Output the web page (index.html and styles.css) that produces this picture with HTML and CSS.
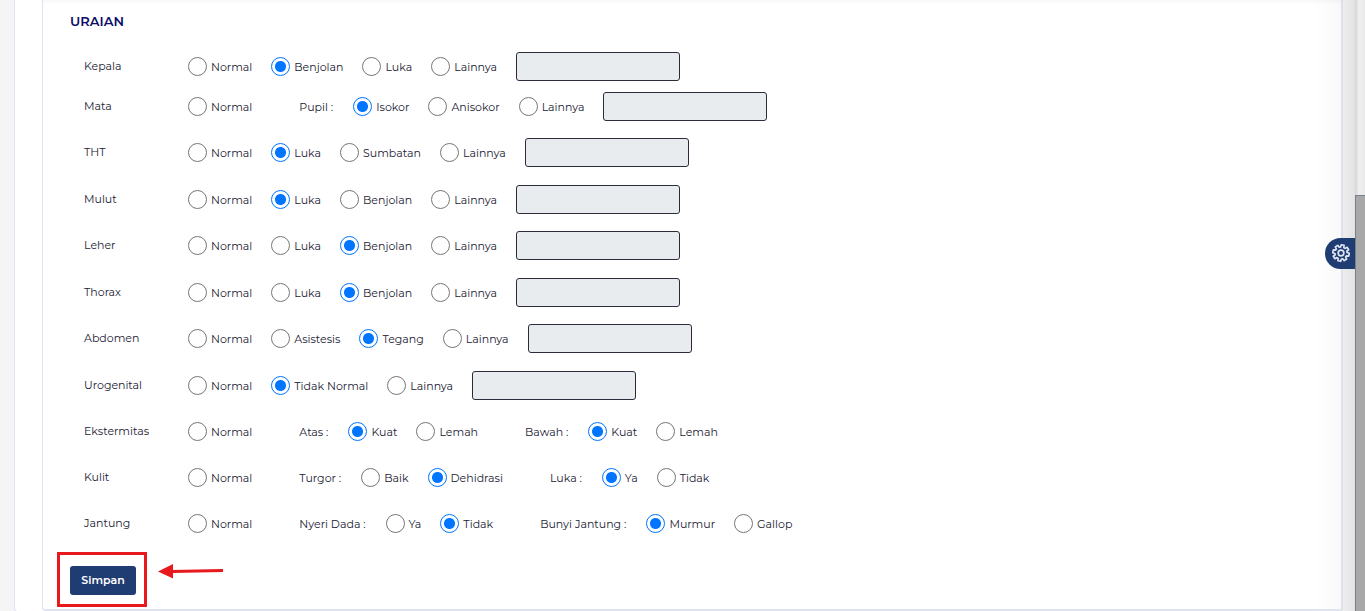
FILE: index.html
```
<!DOCTYPE html>
<html lang="id">
<head>
  <meta charset="UTF-8" />
  <meta name="viewport" content="width=device-width, initial-scale=1.0" />
  <title>Uraian</title>
  <link rel="stylesheet" href="styles.css">
</head>
<body>
  <div class="page">
    <main class="outer-card">
      <form class="inner-card">
        <h2>URAIAN</h2>

        <div class="rows">
          <div class="row">
            <span class="row-label">Kepala</span>
            <label class="option"><input type="radio" name="kepala">Normal</label>
            <label class="option"><input type="radio" name="kepala" checked>Benjolan</label>
            <label class="option"><input type="radio" name="kepala">Luka</label>
            <label class="option"><input type="radio" name="kepala">Lainnya</label>
            <input type="text" class="other" aria-label="Kepala lainnya" disabled>
          </div>
          <div class="row">
            <span class="row-label">Mata</span>
            <label class="option"><input type="radio" name="mata">Normal</label>
            <span class="group-label">Pupil :</span>
            <label class="option"><input type="radio" name="pupil" checked>Isokor</label>
            <label class="option"><input type="radio" name="pupil">Anisokor</label>
            <label class="option"><input type="radio" name="pupil">Lainnya</label>
            <input type="text" class="other" aria-label="Pupil lainnya" disabled>
          </div>
          <div class="row">
            <span class="row-label">THT</span>
            <label class="option"><input type="radio" name="tht">Normal</label>
            <label class="option"><input type="radio" name="tht" checked>Luka</label>
            <label class="option"><input type="radio" name="tht">Sumbatan</label>
            <label class="option"><input type="radio" name="tht">Lainnya</label>
            <input type="text" class="other" aria-label="THT lainnya" disabled>
          </div>
          <div class="row">
            <span class="row-label">Mulut</span>
            <label class="option"><input type="radio" name="mulut">Normal</label>
            <label class="option"><input type="radio" name="mulut" checked>Luka</label>
            <label class="option"><input type="radio" name="mulut">Benjolan</label>
            <label class="option"><input type="radio" name="mulut">Lainnya</label>
            <input type="text" class="other" aria-label="Mulut lainnya" disabled>
          </div>
          <div class="row">
            <span class="row-label">Leher</span>
            <label class="option"><input type="radio" name="leher">Normal</label>
            <label class="option"><input type="radio" name="leher">Luka</label>
            <label class="option"><input type="radio" name="leher" checked>Benjolan</label>
            <label class="option"><input type="radio" name="leher">Lainnya</label>
            <input type="text" class="other" aria-label="Leher lainnya" disabled>
          </div>
          <div class="row">
            <span class="row-label">Thorax</span>
            <label class="option"><input type="radio" name="thorax">Normal</label>
            <label class="option"><input type="radio" name="thorax">Luka</label>
            <label class="option"><input type="radio" name="thorax" checked>Benjolan</label>
            <label class="option"><input type="radio" name="thorax">Lainnya</label>
            <input type="text" class="other" aria-label="Thorax lainnya" disabled>
          </div>
          <div class="row">
            <span class="row-label">Abdomen</span>
            <label class="option"><input type="radio" name="abdomen">Normal</label>
            <label class="option"><input type="radio" name="abdomen">Asistesis</label>
            <label class="option"><input type="radio" name="abdomen" checked>Tegang</label>
            <label class="option"><input type="radio" name="abdomen">Lainnya</label>
            <input type="text" class="other" aria-label="Abdomen lainnya" disabled>
          </div>
          <div class="row">
            <span class="row-label">Urogenital</span>
            <label class="option"><input type="radio" name="urogenital">Normal</label>
            <label class="option"><input type="radio" name="urogenital" checked>Tidak Normal</label>
            <label class="option"><input type="radio" name="urogenital">Lainnya</label>
            <input type="text" class="other" aria-label="Urogenital lainnya" disabled>
          </div>
          <div class="row">
            <span class="row-label">Ekstermitas</span>
            <label class="option"><input type="radio" name="ekstermitas">Normal</label>
            <span class="group-label">Atas :</span>
            <label class="option"><input type="radio" name="atas" checked>Kuat</label>
            <label class="option"><input type="radio" name="atas">Lemah</label>
            <span class="group-label">Bawah :</span>
            <label class="option"><input type="radio" name="bawah" checked>Kuat</label>
            <label class="option"><input type="radio" name="bawah">Lemah</label>
          </div>
          <div class="row">
            <span class="row-label">Kulit</span>
            <label class="option"><input type="radio" name="kulit">Normal</label>
            <span class="group-label">Turgor :</span>
            <label class="option"><input type="radio" name="turgor">Baik</label>
            <label class="option"><input type="radio" name="turgor" checked>Dehidrasi</label>
            <span class="group-label">Luka :</span>
            <label class="option"><input type="radio" name="luka" checked>Ya</label>
            <label class="option"><input type="radio" name="luka">Tidak</label>
          </div>
          <div class="row">
            <span class="row-label">Jantung</span>
            <label class="option"><input type="radio" name="jantung">Normal</label>
            <span class="group-label">Nyeri Dada :</span>
            <label class="option"><input type="radio" name="nyeri">Ya</label>
            <label class="option"><input type="radio" name="nyeri" checked>Tidak</label>
            <span class="group-label">Bunyi Jantung :</span>
            <label class="option"><input type="radio" name="bunyi" checked>Murmur</label>
            <label class="option"><input type="radio" name="bunyi">Gallop</label>
          </div>
        </div>

        <div class="actions">
          <button type="button" class="save-btn">Simpan</button>
          <span class="marker"></span>
          <svg class="arrow" width="66" height="16" viewBox="0 0 66 16" aria-hidden="true">
            <path d="M14 8.5L65 7.5" stroke="#e8191c" stroke-width="3" fill="none"/>
            <path d="M0 8.5L15 1V15.5Z" fill="#e8191c"/>
          </svg>
        </div>
      </form>
    </main>

    <button type="button" class="settings-btn" aria-label="Settings">
      <svg width="20" height="20" viewBox="-12 -12 24 24" fill="none" stroke="#dfe6f3" stroke-width="2" stroke-linejoin="round">
        <path d="M9.8 1.7L7 2L6.4 3.5L8.2 5.7L5.7 8.2L3.5 6.4L2 7L1.7 9.8H-1.7L-2 7L-3.5 6.4L-5.7 8.2L-8.2 5.7L-6.4 3.5L-7 2L-9.8 1.7V-1.7L-7 -2L-6.4 -3.5L-8.2 -5.7L-5.7 -8.2L-3.5 -6.4L-2 -7L-1.7 -9.8H1.7L2 -7L3.5 -6.4L5.7 -8.2L8.2 -5.7L6.4 -3.5L7 -2L9.8 -1.7Z" transform="rotate(12)"/>
        <circle r="3.4"/>
      </svg>
    </button>

    <div class="scrollbar"><div class="thumb"></div></div>
  </div>
</body>
</html>
```

FILE: styles.css
```
* {
  box-sizing: border-box;
}
body {
  margin: 0;
  font-family: Montserrat, Inter, sans-serif;
  font-size: 11px;
  line-height: 16px;
  color: #212133;
  background: #f5f5f5;
}
.page {
  position: relative;
  display: flex;
  min-height: 100vh;
  overflow: hidden;
  background: linear-gradient(to right, #f5f5f5 calc(100% - 30px), #e2e2e2 calc(100% - 10px));
}
.outer-card {
  flex: 1;
  margin-left: 14px;
  margin-right: 12px;
  padding-left: 27px;
  border: 1px solid #e1e1ef;
  border-top: none;
  border-right: 2px solid #dde1ec;
  border-radius: 0 0 4px 4px;
  background: linear-gradient(to right, #fff calc(100% - 26px), #f9f9f9);
}
.inner-card {
  padding: 12px 28px 14px 27px;
  border-left: 1px solid #e1e1ef;
  border-bottom: 2px solid #e1e4f0;
  border-radius: 0 0 0 4px;
  box-shadow: inset 0 6px 5px -5px rgba(0,0,0,0.05);
}
h2 {
  margin: 0 0 22px;
  font-size: 13px;
  line-height: 18px;
  font-weight: 600;
  color: #0c0c66;
}
.rows {
  padding-left: 14px;
}
.row {
  display: flex;
  align-items: center;
  height: 29px;
  margin-bottom: 17px;
}
.row:first-child {
  margin-bottom: 11px;
}
.row:nth-child(3),
.row:nth-child(5),
.row:nth-child(7) {
  margin-bottom: 18px;
}
.row-label {
  width: 104px;
  padding-bottom: 2px;
}
.option {
  display: flex;
  align-items: center;
  gap: 4px;
  margin-right: 19px;
}
.option input {
  appearance: none;
  width: 19px;
  height: 19px;
  margin: 0;
  border: 1px solid #767676;
  border-radius: 50%;
  background: #fff;
}
.option input:checked {
  border-color: #0075ff;
  background: radial-gradient(circle, #0075ff 5px, #fff 6px);
}
.group-label {
  margin-left: 28px;
  margin-right: 20px;
}
.other {
  width: 164px;
  height: 29px;
  padding: 4px 8px;
  border: 1px solid #2b2b3c;
  border-radius: 3px;
  background: #e9ecef;
}
.actions {
  position: relative;
  display: flex;
  margin-top: 28px;
}
.save-btn {
  width: 66px;
  height: 29px;
  padding: 0 0 1px;
  border: none;
  border-radius: 3px;
  background: #1f3c73;
  color: #fff;
  font-family: inherit;
  font-size: 11px;
  font-weight: 600;
  cursor: pointer;
}
.marker {
  position: absolute;
  left: -13px;
  top: -14px;
  width: 90px;
  height: 55px;
  border: 3px solid #e8191c;
}
.arrow {
  position: absolute;
  left: 88px;
  top: -3px;
}
.settings-btn {
  position: absolute;
  right: 10px;
  top: 238px;
  display: flex;
  align-items: center;
  justify-content: center;
  width: 30px;
  height: 31px;
  padding: 0 0 1px 2px;
  border: none;
  border-radius: 16px 0 0 16px;
  background: #1f3c73;
  cursor: pointer;
}
.scrollbar {
  display: flex;
  width: 10px;
  padding-top: 195px;
  background: linear-gradient(to right, #d4d4d4, #f0f0f0 4px, #e9e9e9);
}
.thumb {
  flex: 1;
  border-left: 1px solid #75808f;
  border-top: 1px solid #75808f;
  background: #a8a8a8;
}
```
